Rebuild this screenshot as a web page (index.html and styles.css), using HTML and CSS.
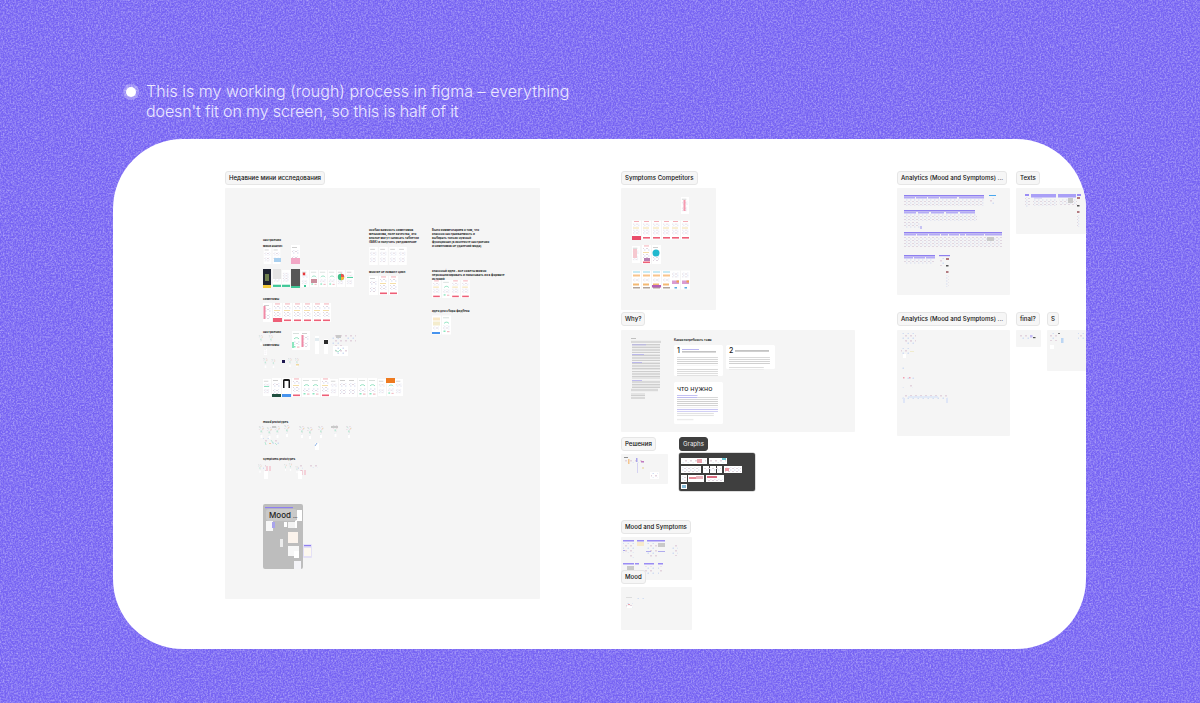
FILE: index.html
```html
<!DOCTYPE html>
<html lang="en">
<head>
<meta charset="utf-8">
<title>Working process in figma</title>
<link rel="stylesheet" href="styles.css">
</head>
<body>
<svg class="noise" aria-hidden="true"><filter id="grain" x="0" y="0" width="100%" height="100%"><feTurbulence type="fractalNoise" baseFrequency="0.6" numOctaves="3" seed="4"/><feColorMatrix type="matrix" values="0 0 0 0 1  0 0 0 0 1  0 0 0 0 1  .75 0 0 0 -.27"/><feGaussianBlur stdDeviation=".35"/></filter><rect width="100%" height="100%" filter="url(#grain)"/></svg>

<svg class="defs" aria-hidden="true">
  <defs>
    <pattern id="faint" width="4" height="3" patternUnits="userSpaceOnUse"><rect width="2" height="1" fill="#e0d6e0"/><rect x="2" y="1.5" width="1.5" height="1" fill="#d6dbef"/></pattern>
    <pattern id="faint2" width="5" height="5" patternUnits="userSpaceOnUse"><rect width="2" height="1.500" fill="#e3d4de"/><rect x="2.500" y="2.500" width="1.500" height="1.500" fill="#d2def3"/></pattern>
    <pattern id="lines" width="20" height="1.6" patternUnits="userSpaceOnUse"><rect width="20" height=".6" fill="#b9b9b9"/></pattern>
    <pattern id="lineslight" width="20" height="2" patternUnits="userSpaceOnUse"><rect width="20" height=".7" fill="#cfcfcf"/></pattern>
    <pattern id="linesblue" width="20" height="2" patternUnits="userSpaceOnUse"><rect width="20" height=".7" fill="#b3b0ee"/></pattern>
    <symbol id="w" viewBox="0 0 9 19"><rect width="9" height="19" fill="#fff"/><rect x="1" y="2" width="5" height=".7" fill="#bbb"/><rect x="1" y="5" width="7" height="4" fill="url(#faint)"/><rect x="1" y="11" width="6" height="5" fill="url(#faint)"/></symbol>
    <symbol id="r" viewBox="0 0 9 19"><rect width="9" height="19" fill="#fff"/><rect x="2" y=".5" width="5" height=".9" fill="#f4a5ae"/><rect x="1" y="3" width="7" height="3" fill="url(#faint)"/><rect x="1" y="7" width="6" height="1" fill="#f5dfa8"/><rect x="1" y="9" width="7" height="5" fill="url(#faint)"/><rect x="1" y="16.500" width="7" height="1.600" fill="#ee5f77"/></symbol>
    <symbol id="g" viewBox="0 0 9 19"><rect width="9" height="19" fill="#fff"/><rect x="1" y="2" width="6" height=".7" fill="#c8d4cf"/><path d="M2 8a3 3 0 0 1 5 0" fill="none" stroke="#7adcb4" stroke-width=".8"/><rect x="1" y="10" width="7" height="4" fill="url(#faint)"/><rect x="1.500" y="15" width="2" height="1.500" fill="#8ce6bf"/><rect x="5" y="15.500" width="2.500" height="1.200" fill="#f1b9c1"/></symbol>
    <symbol id="f" viewBox="0 0 9 19"><rect width="9" height="19" fill="#fff"/><rect x="1" y="3" width="7" height="10" fill="url(#faint)"/><rect y="16.500" width="9" height="2.500" fill="#3fc897"/></symbol>
    <symbol id="b" viewBox="0 0 9 19"><rect width="9" height="19" fill="#fff"/><rect x="1" y="2" width="7" height="3" fill="#fae9c7"/><rect x="1" y="6" width="7" height="4" fill="#f4eccd"/><rect x="1" y="11" width="6" height="3" fill="url(#faint)"/><rect y="16.500" width="8" height="2" fill="#4794ee"/></symbol>
    <symbol id="s" viewBox="0 0 9 19"><rect width="9" height="6" fill="url(#faint2)"/><rect x="1" y="1" width="2" height="2" fill="#cfe6dc"/><rect x="6" y="3" width="2" height="2" fill="#f2d9b8"/><rect x="3" y="6" width="3" height="8" fill="url(#faint2)"/><rect x="3" y="7" width="2.500" height="3" fill="#bfe8d6"/><rect x="3" y="14" width="3" height="5" fill="#fff"/></symbol>
    <symbol id="o" viewBox="0 0 9 19"><rect width="9" height="19" fill="#fff"/><rect x="1" y="1" width="7" height="1" fill="#92d5ea"/><rect x="1" y="4" width="7" height="2" fill="#f9c48b"/><rect x="1" y="8" width="7" height="3" fill="url(#faint)"/><rect x="1" y="13" width="6" height="2" fill="#f3b872"/><rect x="1" y="16.500" width="7" height="1.500" fill="#b0a39b"/></symbol>
    <symbol id="m" viewBox="0 0 9 19"><rect width="9" height="19" fill="#fff"/><rect x="1" y="2" width="7" height="5" fill="url(#faint)"/><rect x="1" y="10" width="7" height="3.500" fill="#d99bd2"/><rect x="5.500" y="10" width="2.500" height="2" fill="#f0a04f"/><rect x="3.500" y="16.500" width="2.500" height="1.500" fill="#59a8e0"/></symbol>
  </defs>
</svg>

<header class="note">
  <span class="dot"></span>
  <p class="note-text"><span class="line-a">This is my working (rough) process in figma – everything</span><span class="line-b">doesn't fit on my screen, so this is half of it</span></p>
</header>

<main class="board">

  <div class="tag t-research">Недавние мини исследования</div>
  <section class="frame f-research">
    <svg class="art" viewBox="225 188 315 411">
      <use href="#w" x="263" y="248" width="9" height="16"/><use href="#w" x="272" y="248" width="9" height="16"/>
      <rect x="274" y="258" width="7" height="4" fill="#a9d0ef"/>
      <use href="#w" x="291" y="245" width="9" height="19"/><rect x="291" y="258" width="9" height="6" fill="#f2a8c6"/>

      <rect x="263" y="269" width="8" height="19" fill="#1d2230"/><rect x="263" y="285" width="8" height="3" fill="#f2c93b"/><rect x="265" y="274" width="4" height="7" fill="#6e7f4e"/>
      <use href="#f" x="273" y="269" width="8" height="19"/><rect x="273" y="269" width="8" height="10" fill="#e4e4e4"/>
      <use href="#f" x="282" y="269" width="8" height="19"/>
      <rect x="291" y="269" width="9" height="19" fill="#565656"/><rect x="291" y="286" width="9" height="2" fill="#3fc897"/>
      <use href="#w" x="301" y="269" width="8" height="19"/><circle cx="304" cy="274" r="1.400" fill="#e5383b"/><rect x="304" y="285" width="2" height="2" fill="#3fc897"/>
      <use href="#g" x="310" y="269" width="8" height="19"/><rect x="311" y="279" width="6" height="4" fill="#c98d9b"/>
      <use href="#g" x="319" y="269" width="8" height="19"/>
      <use href="#g" x="328" y="269" width="8" height="19"/>
      <use href="#w" x="337" y="269" width="8" height="19"/><circle cx="341" cy="277" r="3.200" fill="#3fbf87"/><path d="M341 277V273.800A3.200 3.200 0 0 1 344.200 277Z" fill="#ef5350"/><path d="M341 277H344.200A3.200 3.200 0 0 1 341 280.200Z" fill="#f5b335"/>
      <use href="#w" x="346" y="269" width="8" height="19"/><rect x="347" y="277" width="6" height="1" fill="#57d6a3"/>

      <use href="#w" x="263" y="303" width="9" height="19"/><rect x="263.500" y="306" width="2" height="13" fill="#f08aa6"/>
      <use href="#r" x="273" y="303" width="9" height="19"/><rect x="273" y="318" width="9" height="4" fill="#ee5f77"/>
      <use href="#r" x="283" y="303" width="9" height="19"/>
      <use href="#r" x="293" y="303" width="9" height="19"/>
      <use href="#r" x="303" y="303" width="9" height="19"/>
      <use href="#r" x="313" y="303" width="9" height="19"/>
      <use href="#r" x="322" y="303" width="9" height="19"/>

      <use href="#s" x="258" y="335" width="6" height="10"/><use href="#s" x="268" y="335" width="6" height="10"/>
      <use href="#g" x="292" y="331" width="9" height="19"/><rect x="292" y="342" width="2" height="6" fill="#8ce6bf"/>
      <use href="#w" x="301" y="331" width="9" height="19"/><rect x="301.500" y="335" width="2" height="12" fill="#f08aa6"/>
      <rect x="315" y="336" width="4" height="18" fill="#fff"/><rect x="315" y="338" width="4" height="3" fill="#e3ecf0"/>
      <rect x="324" y="339" width="4" height="15" fill="#fff"/><rect x="324" y="340" width="4" height="4" fill="#2a2a2a"/>
      <rect x="332" y="335" width="10" height="12" fill="url(#faint2)"/>
      <rect x="336" y="335" width="5" height="3" fill="#c9c9c9"/><rect x="333" y="346" width="15" height="10" fill="#fff"/><rect x="334" y="347" width="13" height="8" fill="url(#faint2)"/><path d="M335 350l3 2 3-3" fill="none" stroke="#86e0b8" stroke-width=".7"/>
      <rect x="345" y="335" width="11" height="7" fill="url(#faint2)"/>
      <use href="#w" x="263" y="349" width="5" height="6"/>
      <use href="#s" x="263" y="358" width="5" height="10"/><use href="#s" x="270" y="359" width="7" height="9"/><rect x="282" y="360" width="3" height="3" fill="#1e1850"/><use href="#s" x="287" y="358" width="6" height="9"/><use href="#s" x="294" y="358" width="6" height="9"/><rect x="296" y="364" width="3" height="1.500" fill="#f0d9a0"/>

      <use href="#w" x="263" y="378" width="8" height="19"/><rect x="264" y="386" width="5" height=".8" fill="#79dcb2"/>
      <use href="#w" x="272" y="378" width="9" height="19"/><rect x="272" y="394" width="9" height="3" fill="#1f4f3f"/>
      <rect x="282" y="378" width="9" height="19" fill="#fff"/><path d="M283 388v-8a2 2 0 0 1 2-1h3a2 2 0 0 1 2 1v8h-1.500v-7h-4v7z" fill="#1a1a1a"/><rect x="282" y="394" width="9" height="3" fill="#4794ee"/>
      <use href="#r" x="292" y="378" width="9" height="19"/>
      <use href="#g" x="302" y="378" width="9" height="19"/>
      <use href="#g" x="311" y="378" width="9" height="19"/>
      <use href="#r" x="321" y="378" width="9" height="19"/>
      <use href="#w" x="330" y="378" width="8" height="19"/>
      <use href="#w" x="339" y="378" width="9" height="19"/>
      <use href="#w" x="348" y="378" width="9" height="19"/>
      <use href="#g" x="358" y="378" width="9" height="19"/>
      <use href="#g" x="368" y="378" width="9" height="19"/>
      <use href="#w" x="378" y="378" width="8" height="19"/>
      <use href="#g" x="387" y="378" width="8" height="19"/><rect x="386" y="378" width="9" height="5" fill="#ee7a1f"/>
      <use href="#w" x="395" y="378" width="8" height="19"/>

      <use href="#s" x="258" y="426" width="7" height="12"/><use href="#s" x="266" y="427" width="7" height="12"/><use href="#s" x="274" y="426" width="7" height="12"/><use href="#s" x="283" y="425" width="8" height="12"/>
      <rect x="272" y="426" width="4" height="2" fill="#c9c9c9"/>
      <use href="#s" x="298" y="426" width="8" height="12"/><use href="#s" x="307" y="427" width="6" height="12"/><use href="#s" x="317" y="426" width="8" height="12"/><use href="#s" x="331" y="425" width="9" height="12"/><use href="#s" x="346" y="426" width="6" height="12"/>
      <rect x="331" y="426" width="7" height="2" fill="#c9c9c9"/><rect x="315" y="443" width="4" height="7" fill="#fff"/><path d="M315 446l2-3" stroke="#8fb4e8" stroke-width="1"/>
      <rect x="263" y="438" width="6" height="4" fill="url(#faint2)"/><rect x="272" y="440" width="7" height="5" fill="url(#faint2)"/><path d="M265 442l1 3M271 440l2 3M275 443l2 2" stroke="#8ddfc0" stroke-width=".6"/><rect x="269" y="443" width="2" height="1" fill="#f2c7a6"/>

      <use href="#s" x="258" y="464" width="4" height="9"/><rect x="263" y="464" width="3" height="8" fill="url(#faint2)"/>
      <path d="M267 466v5M270 466v5" stroke="#f29cae" stroke-width=".8"/><rect x="264" y="471" width="4" height="8" fill="#fff"/>
      <use href="#s" x="283" y="464" width="5" height="7"/><use href="#s" x="288" y="463" width="5" height="8"/>
      <use href="#s" x="295" y="466" width="4" height="7"/><rect x="298" y="464" width="5" height="8" fill="url(#faint2)"/><path d="M302 470v5M305 470v5" stroke="#f29cae" stroke-width=".8"/><rect x="298" y="471" width="4" height="8" fill="#fff"/>
      <rect x="310" y="464" width="8" height="4" fill="url(#faint2)"/>

      <rect x="263" y="504" width="40" height="65" rx="2" fill="#bdbdbd"/>
      <rect x="265" y="507" width="28" height="1.200" fill="#8e7ff0"/>
      <rect x="297" y="510" width="5" height="11" fill="#fff"/><rect x="266" y="521" width="7" height="10" fill="#f7f7f7"/><rect x="272" y="522" width="3" height="6" fill="#a9a4ec"/>
      <rect x="284" y="522" width="3" height="5" fill="#fff"/><rect x="288" y="522" width="8" height="6" fill="#f3f3f3"/><rect x="295" y="520" width="2" height="8" fill="#fff"/>
      <rect x="288" y="532" width="10" height="11" fill="#fbf3ec"/><rect x="280" y="539" width="3" height="8" fill="#ececec"/>
      <rect x="288" y="546" width="11" height="10" fill="#f7f7f7"/><rect x="294" y="551" width="5" height="7" fill="#fff"/>
      <rect x="294" y="561" width="7" height="8" fill="#f4f4f8"/>
      <rect x="303" y="544" width="9" height="14" rx="1" fill="#e4e1f6"/><rect x="304" y="545" width="7" height="1.200" fill="#8e7ff0"/><rect x="304" y="548" width="7" height="8" fill="#fdf8ef"/>
    </svg>
    <span class="mini m1">настроения</span>
    <span class="mini m2">мини анализ</span>
    <span class="mini m3">симптомы</span>
    <span class="mini m4">настроения</span>
    <span class="mini m5">симптомы</span>
    <span class="mini m6">mood prototypes</span>
    <span class="mini m7">symptoms prototypes</span>
    <p class="mini block m8">особая важность симптомов механизма, поле качества, это вполне могут записать таблетки (БАК) и получить уведомление</p>
    <p class="mini block m9">Было комментариев о том, что классно настраиваемость и выбирать только нужный функционал (в контексте настроения и симптомов не удалений мода)</p>
    <span class="mini m10">многие не ломают цикл</span>
    <p class="mini block m11">классный идеи - все советы можно персонализировать и показывать их в формате историй</p>
    <span class="mini m12">идея для сбора фидбека</span>
    <svg class="art" viewBox="225 188 315 411">
      <use href="#w" x="369" y="247" width="9" height="18"/><use href="#w" x="379" y="247" width="9" height="18"/><use href="#w" x="389" y="247" width="9" height="18"/><use href="#w" x="398" y="247" width="9" height="18"/>
      <use href="#w" x="369" y="276" width="9" height="19"/><use href="#r" x="379" y="276" width="9" height="19"/><use href="#r" x="389" y="276" width="9" height="19"/>
      <use href="#r" x="432" y="280" width="9" height="18"/><use href="#g" x="442" y="280" width="9" height="18"/><use href="#r" x="451" y="280" width="9" height="18"/><use href="#r" x="461" y="280" width="9" height="18"/>
      <use href="#b" x="432" y="315" width="9" height="20"/><use href="#g" x="442" y="315" width="9" height="20"/>
    </svg>
    <span class="mood-tag">Mood <small>...</small></span>
  </section>

  <div class="tag t-comp">Symptoms Competitors</div>
  <section class="frame f-comp">
    <svg class="art" viewBox="621 188 95 122">
      <use href="#w" x="681" y="196" width="8" height="19"/><rect x="683.500" y="200" width="2" height="11" fill="#f59ab0"/>
      <use href="#r" x="632" y="220" width="9" height="20"/><rect x="632" y="236" width="9" height="4" fill="#e94c6a"/>
      <use href="#r" x="642" y="220" width="9" height="20"/><use href="#r" x="652" y="220" width="9" height="20"/><use href="#r" x="662" y="220" width="9" height="20"/><use href="#r" x="671" y="220" width="9" height="20"/><use href="#r" x="681" y="220" width="9" height="20"/>
      <use href="#w" x="632" y="245" width="8" height="19"/><rect x="633" y="249" width="4" height="9" fill="#f6c8d0"/>
      <use href="#r" x="642" y="245" width="9" height="19"/><rect x="644" y="258" width="6" height="3" fill="#b77eb0"/>
      <use href="#w" x="652" y="245" width="9" height="19"/><circle cx="656" cy="253" r="3.500" fill="#22b9cf"/>
      <use href="#o" x="632" y="270" width="9" height="20"/><use href="#o" x="642" y="270" width="9" height="20"/><use href="#o" x="652" y="270" width="9" height="20"/><use href="#o" x="662" y="270" width="9" height="20"/><use href="#m" x="671" y="270" width="9" height="20"/><use href="#m" x="681" y="270" width="9" height="20"/>
      <rect x="652" y="285" width="9" height="2.500" fill="#b45fb5"/>
    </svg>
  </section>

  <div class="tag t-why">Why?</div>
  <section class="frame f-why">
    <svg class="art" viewBox="621 330 234 102">
      <rect x="631" y="338" width="5" height=".7" fill="#aaa"/>
      <rect x="631" y="340" width="30" height="3" fill="url(#lines)"/>
      <rect x="632" y="344" width="28" height="9" fill="url(#lines)"/><rect x="632" y="344.500" width="14" height=".7" fill="#a9a5ee"/>
      <rect x="632" y="354" width="28" height="7" fill="url(#lines)"/><rect x="632" y="354" width="12" height=".7" fill="#a9a5ee"/>
      <rect x="632" y="362" width="28" height="8" fill="url(#lines)"/><rect x="632" y="362" width="10" height=".7" fill="#a9a5ee"/>
      <rect x="632" y="371" width="28" height="8" fill="url(#lines)"/>
      <rect x="632" y="380" width="28" height="8" fill="url(#lines)"/><rect x="632" y="380" width="10" height=".7" fill="#a9a5ee"/>
      <rect x="631" y="388" width="27" height="4" fill="url(#lines)"/>
      <rect x="631" y="393" width="14" height="6" fill="url(#lines)"/>
    </svg>
    <span class="why-title">Какая потребность тьма</span>
    <article class="card c1">
      <div class="card-head"><b>1</b><svg class="card-lines" viewBox="0 0 34 5"><rect width="17" height=".8" fill="#a9a5ee"/><rect y="2.500" width="34" height=".8" fill="#888"/></svg></div>
      <svg class="card-body" viewBox="0 0 42 20"><rect width="40" height="8" fill="url(#lineslight)"/><rect y="11" width="40" height="8" fill="url(#lineslight)"/></svg>
    </article>
    <article class="card c2">
      <div class="card-head"><b>2</b><svg class="card-lines" viewBox="0 0 34 5"><rect y="1.500" width="34" height=".9" fill="#888"/></svg></div>
      <svg class="card-body" viewBox="0 0 42 16"><rect width="40" height="7" fill="url(#lineslight)"/><rect y="10" width="34" height="2" fill="url(#lineslight)"/></svg>
    </article>
    <article class="card c3">
      <h3 class="need">что нужно</h3>
      <svg class="card-body" viewBox="0 0 42 28"><rect width="20" height="4" fill="url(#linesblue)"/><rect x="20" y="2" width="20" height="2" fill="url(#lineslight)"/><rect y="4" width="40" height="8" fill="url(#lineslight)"/><rect y="13" width="40" height="3.500" fill="url(#linesblue)"/><rect y="17" width="36" height="4" fill="url(#lineslight)"/><rect y="23" width="16" height="2" fill="url(#lineslight)"/></svg>
    </article>
  </section>

  <div class="tag t-sol">Решения</div>
  <section class="frame f-sol">
    <svg class="art" viewBox="621 454 47 30">
      <rect x="624" y="457" width="4" height=".8" fill="#777"/>
      <rect x="624" y="459" width="20" height="4" fill="url(#faint2)"/><rect x="641" y="461" width="3" height="1.500" fill="#c27bc0"/>
      <rect x="628" y="459" width="1.500" height="5" fill="#f5c58d"/><rect x="636" y="458" width="1.500" height="4" fill="#a9a4ec"/>
      <rect x="637" y="463" width="1" height="10" fill="#d5d2f2"/><rect x="642" y="467" width="2" height="2" fill="#eee2c2"/>
      <rect x="650" y="472" width="9" height="7" fill="#fff"/><rect x="651" y="473" width="7" height="5" fill="url(#faint2)"/>
    </svg>
  </section>

  <div class="tag dark t-graphs">Graphs</div>
  <section class="frame dark f-graphs">
    <svg class="art" viewBox="679 453 76 38">
      <rect x="681" y="458" width="26" height="6" fill="#fff"/><rect x="682" y="459" width="24" height="4" fill="url(#faint2)"/><rect x="697" y="459" width="5" height="4" fill="#e8a2ad"/>
      <rect x="709" y="458" width="18" height="6" fill="#fff"/><rect x="710" y="459" width="16" height="4" fill="url(#faint2)"/><rect x="722" y="458" width="4" height="2" fill="#68c2cf"/>
      <rect x="681" y="466" width="20" height="7" fill="#fff"/><rect x="682" y="467" width="18" height="5" fill="url(#faint)"/>
      <rect x="703" y="466" width="6" height="7" fill="#fff"/><rect x="710" y="466" width="6" height="7" fill="#fff"/><rect x="717" y="466" width="5" height="7" fill="#fff"/><rect x="704" y="468" width="17" height="3" fill="url(#faint)"/>
      <rect x="724" y="466" width="18" height="7" fill="#fff"/><rect x="725" y="467" width="16" height="5" fill="url(#faint)"/><rect x="725" y="468" width="4" height="3" fill="#eb9aa6"/>
      <rect x="681" y="475" width="6" height="7" fill="#fff"/><rect x="682" y="476" width="4" height="5" fill="url(#faint)"/>
      <rect x="688" y="475" width="16" height="7" fill="#fff"/><rect x="689" y="477" width="7" height="2" fill="#e88a98"/><rect x="696" y="476" width="7" height="3" fill="#eab3bc"/>
      <rect x="706" y="475" width="18" height="7" fill="#fff"/><rect x="707" y="476" width="10" height="2" fill="#d96b80"/><rect x="707" y="479" width="16" height="2" fill="url(#faint)"/>
      <rect x="681" y="484" width="6" height="5" fill="#fff"/><rect x="682" y="485" width="4" height="3" fill="#87bbd8"/>
    </svg>
  </section>

  <div class="tag t-ms">Mood and Symptoms</div>
  <section class="frame f-ms">
    <svg class="art" viewBox="621 537 71 43">
      <rect x="623" y="540" width="11" height="1.500" fill="#9a8cf5"/><rect x="637" y="540" width="7" height="1.500" fill="#9a8cf5"/><rect x="647" y="540" width="18" height="1.500" fill="#9a8cf5"/>
      <rect x="623" y="543" width="11" height="10" fill="url(#faint2)"/><rect x="637" y="542" width="7" height="4" fill="#f7eacb"/><rect x="647" y="543" width="10" height="14" fill="url(#faint2)"/><rect x="658" y="543" width="7" height="4" fill="#c9c9c9"/>
      <rect x="646" y="551" width="5" height=".9" fill="#a9a4ec"/><rect x="658" y="551" width="7" height=".9" fill="#a9a4ec"/><rect x="672" y="544" width="6" height="12" fill="url(#faint2)"/>
      <rect x="623" y="550" width="2" height="1" fill="#a9a4ec"/><rect x="630" y="554" width="4" height="4" fill="url(#faint2)"/>
      <rect x="623" y="563" width="11" height="1.500" fill="#9a8cf5"/><rect x="635" y="563" width="4" height="1.500" fill="#9a8cf5"/><rect x="644" y="563" width="10" height="1.500" fill="#9a8cf5"/><rect x="658" y="563" width="5" height="1.500" fill="#9a8cf5"/>
      <rect x="627" y="566" width="7" height="4" fill="#c9c9c9"/><rect x="644" y="566" width="10" height="9" fill="url(#faint2)"/><rect x="658" y="566" width="4" height="8" fill="url(#faint2)"/>
    </svg>
  </section>

  <div class="tag t-mood">Mood</div>
  <section class="frame f-mood">
    <svg class="art" viewBox="621 587 71 43">
      <rect x="626" y="597" width="6" height="1" fill="#ddd"/><rect x="636" y="598" width="10" height="2" fill="url(#faint2)"/>
      <rect x="626" y="603" width="7" height="5" fill="url(#faint2)"/><rect x="627" y="606" width="5" height="2" fill="#fff"/><rect x="628" y="604" width="2" height="1" fill="#e8a2ad"/>
    </svg>
  </section>

  <div class="tag t-a1">Analytics (Mood and Symptoms) ...</div>
  <section class="frame f-a1">
    <svg class="art" viewBox="897 188 113 107">
      <rect x="904" y="195" width="80" height="1.500" fill="#8e7ff0"/>
      <rect x="904" y="197" width="11" height="1.500" fill="#b4abf6"/><rect x="916" y="197" width="11" height="1.500" fill="#b4abf6"/><rect x="928" y="197" width="11" height="1.500" fill="#b4abf6"/><rect x="940" y="197" width="17" height="1.500" fill="#b4abf6"/><rect x="959" y="197" width="25" height="1.500" fill="#b4abf6"/>
      <rect x="904" y="199" width="80" height="7" fill="url(#faint)"/><rect x="989" y="195" width="7" height="1" fill="#49a7ee"/><rect x="989" y="198" width="5" height="6" fill="url(#faint2)"/>
      <rect x="904" y="210" width="71" height="1.500" fill="#8e7ff0"/>
      <rect x="904" y="212" width="12" height="1.500" fill="#b4abf6"/><rect x="918" y="212" width="11" height="1.500" fill="#b4abf6"/><rect x="931" y="212" width="13" height="1.500" fill="#b4abf6"/><rect x="946" y="212" width="12" height="1.500" fill="#b4abf6"/><rect x="960" y="212" width="15" height="1.500" fill="#b4abf6"/>
      <rect x="904" y="214" width="73" height="7" fill="url(#faint)"/><rect x="904" y="222" width="16" height="6" fill="url(#faint)"/><rect x="920" y="226" width="2" height="3" fill="#c7c3f3"/>
      <rect x="904" y="232" width="98" height="1.500" fill="#8e7ff0"/>
      <rect x="904" y="234" width="12" height="1.500" fill="#b4abf6"/><rect x="917" y="234" width="11" height="1.500" fill="#b4abf6"/><rect x="929" y="234" width="11" height="1.500" fill="#b4abf6"/><rect x="941" y="234" width="7" height="1.500" fill="#b4abf6"/><rect x="949" y="234" width="10" height="1.500" fill="#b4abf6"/><rect x="960" y="234" width="5" height="1.500" fill="#b4abf6"/><rect x="966" y="234" width="18" height="1.500" fill="#b4abf6"/><rect x="985" y="234" width="17" height="1.500" fill="#b4abf6"/>
      <rect x="904" y="237" width="98" height="10" fill="url(#faint)"/><rect x="987" y="237" width="7" height="4" fill="#c9c9c9"/>
      <rect x="904" y="255" width="31" height="1.500" fill="#8e7ff0"/><rect x="904" y="257" width="9" height="1.500" fill="#b4abf6"/><rect x="914" y="257" width="11" height="1.500" fill="#b4abf6"/><rect x="926" y="257" width="9" height="1.500" fill="#b4abf6"/>
      <rect x="904" y="259" width="30" height="5" fill="url(#faint)"/>
      <rect x="939" y="255" width="11" height="1.200" fill="#8e7ff0"/><rect x="940" y="258" width="4" height="8" fill="url(#faint2)"/><rect x="946" y="258" width="3" height="2" fill="#b27a7f"/><rect x="946" y="265" width="2.500" height="1.500" fill="#555"/><rect x="946" y="271" width="2.500" height="2" fill="#b27a7f"/><rect x="946" y="275" width="2.500" height="12" fill="url(#faint)"/>
    </svg>
  </section>

  <div class="tag t-texts">Texts</div>
  <section class="frame f-texts">
    <svg class="art" viewBox="1016 188 70 46">
      <rect x="1025" y="194" width="4" height="2" fill="#9a8cf5"/><rect x="1031" y="194" width="25" height="3.500" fill="#a99ff7"/><rect x="1034" y="197" width="8" height="1.500" fill="#c7c1f8"/><rect x="1058" y="194" width="18" height="3.500" fill="#a99ff7"/><rect x="1077" y="194" width="4" height="2" fill="#9a8cf5"/>
      <rect x="1025" y="197" width="5" height="10" fill="url(#faint)"/><rect x="1033" y="199" width="24" height="7" fill="url(#faint)"/><rect x="1059" y="199" width="18" height="6" fill="url(#faint)"/><rect x="1068" y="198" width="5" height="5" fill="#c9c9c9"/>
      <rect x="1077" y="197" width="3" height="2" fill="#b27a7f"/><rect x="1077" y="205" width="2.500" height="1.500" fill="#555"/><rect x="1077" y="211" width="2.500" height="2" fill="#b27a7f"/><rect x="1077" y="215" width="2.500" height="12" fill="url(#faint)"/>
    </svg>
  </section>

  <div class="tag t-a2">Analytics (Mood and Symptoms) ...</div>
  <section class="frame f-a2">
    <svg class="art" viewBox="897 330 113 106">
      <rect x="902" y="333" width="14" height="9" fill="url(#faint2)"/><rect x="906" y="341" width="8" height="3" fill="url(#faint2)"/><rect x="901" y="348" width="8" height="6" fill="url(#faint2)"/><rect x="910" y="351" width="4" height=".8" fill="#efe9c4"/><rect x="903" y="354" width="3" height="4" fill="#fff"/>
      <rect x="902" y="366" width="3" height="6" fill="url(#faint2)"/><rect x="905" y="377" width="10" height="3" fill="url(#faint2)"/><rect x="903" y="377" width="1.500" height="1.500" fill="#f1a1b4"/><rect x="909" y="377" width="1.500" height="1.500" fill="#f1a1b4"/><rect x="902" y="384" width="3" height="4" fill="url(#faint2)"/><rect x="910" y="384" width="3" height="4" fill="url(#faint2)"/>
      <rect x="902" y="395" width="46" height="5" fill="url(#faint2)"/><rect x="908" y="396" width="30" height="2" fill="#dde7f7" opacity=".8"/><rect x="903" y="398" width="2" height="5" fill="#dfe6f7"/><rect x="946" y="398" width="2" height="5" fill="#dfe6f7"/>
    </svg>
  </section>

  <div class="tag t-final">final?</div>
  <section class="frame f-final">
    <svg class="art" viewBox="1016 330 25 17">
      <rect x="1019" y="334" width="10" height="5" fill="url(#faint2)"/><rect x="1030" y="335" width="2.500" height="2.500" fill="#c4bcf5"/><rect x="1033" y="337" width="2.500" height="1.200" fill="#555"/>
    </svg>
  </section>

  <div class="tag t-s">S</div>
  <section class="frame f-s">
    <svg class="art" viewBox="1047 330 39 41">
      <rect x="1050" y="333" width="7" height="8" fill="url(#faint2)"/><rect x="1058" y="333" width="2" height="1" fill="#777"/><rect x="1061" y="338" width="2.500" height="5" fill="#bcd6f3"/><rect x="1050" y="345" width="4" height="4" fill="#fff"/>
      <rect x="1078" y="333" width="7" height="7" fill="url(#faint2)"/>
    </svg>
  </section>
</main>
</body>
</html>
```
FILE: styles.css
```css
* { box-sizing: border-box; }

html, body { margin: 0; padding: 0; }

body {
  position: relative;
  width: 1200px;
  height: 703px;
  overflow: hidden;
  background: #7663f3;
  font-family: "Inter", "Liberation Sans", sans-serif;
}

.noise {
  position: absolute;
  inset: 0;
  width: 100%;
  height: 100%;
}

.defs {
  position: absolute;
  width: 0;
  height: 0;
}

.note {
  position: relative;
  display: flex;
  align-items: flex-start;
  gap: 10px;
  padding: 81px 0 0 126px;
  height: 139px;
}

.dot {
  flex: none;
  width: 10px;
  height: 10px;
  margin-top: 6px;
  border-radius: 50%;
  background: #fff;
  box-shadow: 0 0 0 3px rgba(255, 255, 255, .28);
}

.note-text {
  margin: 0;
  font-size: 16px;
  font-weight: 300;
  line-height: 20px;
  color: #ece8ff;
  white-space: nowrap;
}

.line-a,
.line-b { display: block; }

.line-a { letter-spacing: .03px; }
.line-b { letter-spacing: -.12px; }

.board {
  position: relative;
  width: 973px;
  height: 510px;
  margin-left: 113px;
  overflow: hidden;
  background: #fff;
  border-radius: 70px;
}

.tag {
  position: absolute;
  height: 14px;
  padding: 0 3px;
  font-size: 6.1px;
  font-weight: 500;
  line-height: 12px;
  color: #111;
  white-space: nowrap;
  background: #f6f6f6;
  border: 1px solid #e6e6e6;
  border-radius: 3px;
}

.tag.dark {
  color: #ddd;
  background: #3f3f3f;
  border-color: #3f3f3f;
}

.frame {
  position: absolute;
  overflow: hidden;
  background: #f5f5f5;
  border-radius: 1px;
}

.frame.dark {
  background: #3f3f3f;
  border-radius: 2px;
  box-shadow: 0 0 0 .5px #bbb;
}

.art {
  position: absolute;
  inset: 0;
  width: 100%;
  height: 100%;
}

/* canvas positions of the frames, in board coordinates */
.t-research { left: 112px; top: 32px; }
.f-research { left: 112px; top: 49px; width: 315px; height: 411px; }
.t-comp { left: 508px; top: 32px; }
.f-comp { left: 508px; top: 49px; width: 95px; height: 122px; }
.t-why { left: 508px; top: 173px; }
.f-why { left: 508px; top: 191px; width: 234px; height: 102px; }
.t-sol { left: 508px; top: 298px; }
.f-sol { left: 508px; top: 315px; width: 47px; height: 30px; }
.t-graphs { left: 566px; top: 298px; }
.f-graphs { left: 566px; top: 314px; width: 76px; height: 38px; }
.t-ms { left: 508px; top: 381px; }
.f-ms { left: 508px; top: 398px; width: 71px; height: 43px; }
.t-mood { left: 508px; top: 431px; z-index: 1; }
.f-mood { left: 508px; top: 448px; width: 71px; height: 43px; }
.t-a1 { left: 784px; top: 32px; }
.f-a1 { left: 784px; top: 49px; width: 113px; height: 107px; }
.t-texts { left: 903px; top: 32px; }
.f-texts { left: 903px; top: 49px; width: 70px; height: 46px; }
.t-a2 { left: 784px; top: 173px; }
.f-a2 { left: 784px; top: 191px; width: 113px; height: 106px; }
.t-final { left: 903px; top: 173px; }
.f-final { left: 903px; top: 191px; width: 25px; height: 17px; }
.t-s { left: 934px; top: 173px; }
.f-s { left: 934px; top: 191px; width: 39px; height: 41px; }

/* tiny headings inside the research frame, placed on its canvas */
.mini {
  position: absolute;
  margin: 0;
  font-size: 3px;
  font-weight: 700;
  line-height: 4px;
  color: #222;
  white-space: nowrap;
}

.mini.block { white-space: normal; }

.m1 { left: 38px; top: 50px; }
.m2 { left: 38px; top: 56px; }
.m3 { left: 38px; top: 109px; }
.m4 { left: 38px; top: 142px; }
.m5 { left: 38px; top: 155px; }
.m6 { left: 38px; top: 232px; }
.m7 { left: 38px; top: 269px; }
.m8 { left: 144px; top: 40px; width: 54px; }
.m9 { left: 207px; top: 40px; width: 58px; }
.m10 { left: 144px; top: 82px; }
.m11 { left: 207px; top: 81px; width: 84px; }
.m12 { left: 207px; top: 121px; }

.mood-tag {
  position: absolute;
  left: 41px;
  top: 321px;
  width: 31px;
  height: 12px;
  padding-left: 3px;
  font-size: 8px;
  font-weight: 500;
  line-height: 12px;
  color: #222;
  background: #c9c9c9;
  border-radius: 3px;
  white-space: nowrap;
}

.mood-tag small { font-size: 5px; }

.why-title {
  position: absolute;
  left: 53px;
  top: 8px;
  font-size: 3px;
  font-weight: 700;
  line-height: 4px;
  color: #222;
  white-space: nowrap;
}

.card {
  position: absolute;
  padding: 2px 3px;
  background: #fff;
  border-radius: 1.500px;
}

.c1 { left: 53px; top: 15px; width: 49px; height: 31px; }
.c2 { left: 105px; top: 15px; width: 49px; height: 24px; }
.c3 { left: 53px; top: 52px; width: 49px; height: 42px; }

.card-head {
  display: flex;
  align-items: center;
  gap: 2px;
  height: 8px;
}

.card-head b {
  font-size: 7px;
  font-weight: 500;
  line-height: 8px;
  color: #222;
}

.card-lines {
  width: 34px;
  height: 5px;
}

.card-body {
  display: block;
  width: 43px;
  margin-top: 2px;
}

.need {
  margin: 0;
  font-size: 7px;
  font-weight: 400;
  line-height: 9px;
  color: #222;
}
```
